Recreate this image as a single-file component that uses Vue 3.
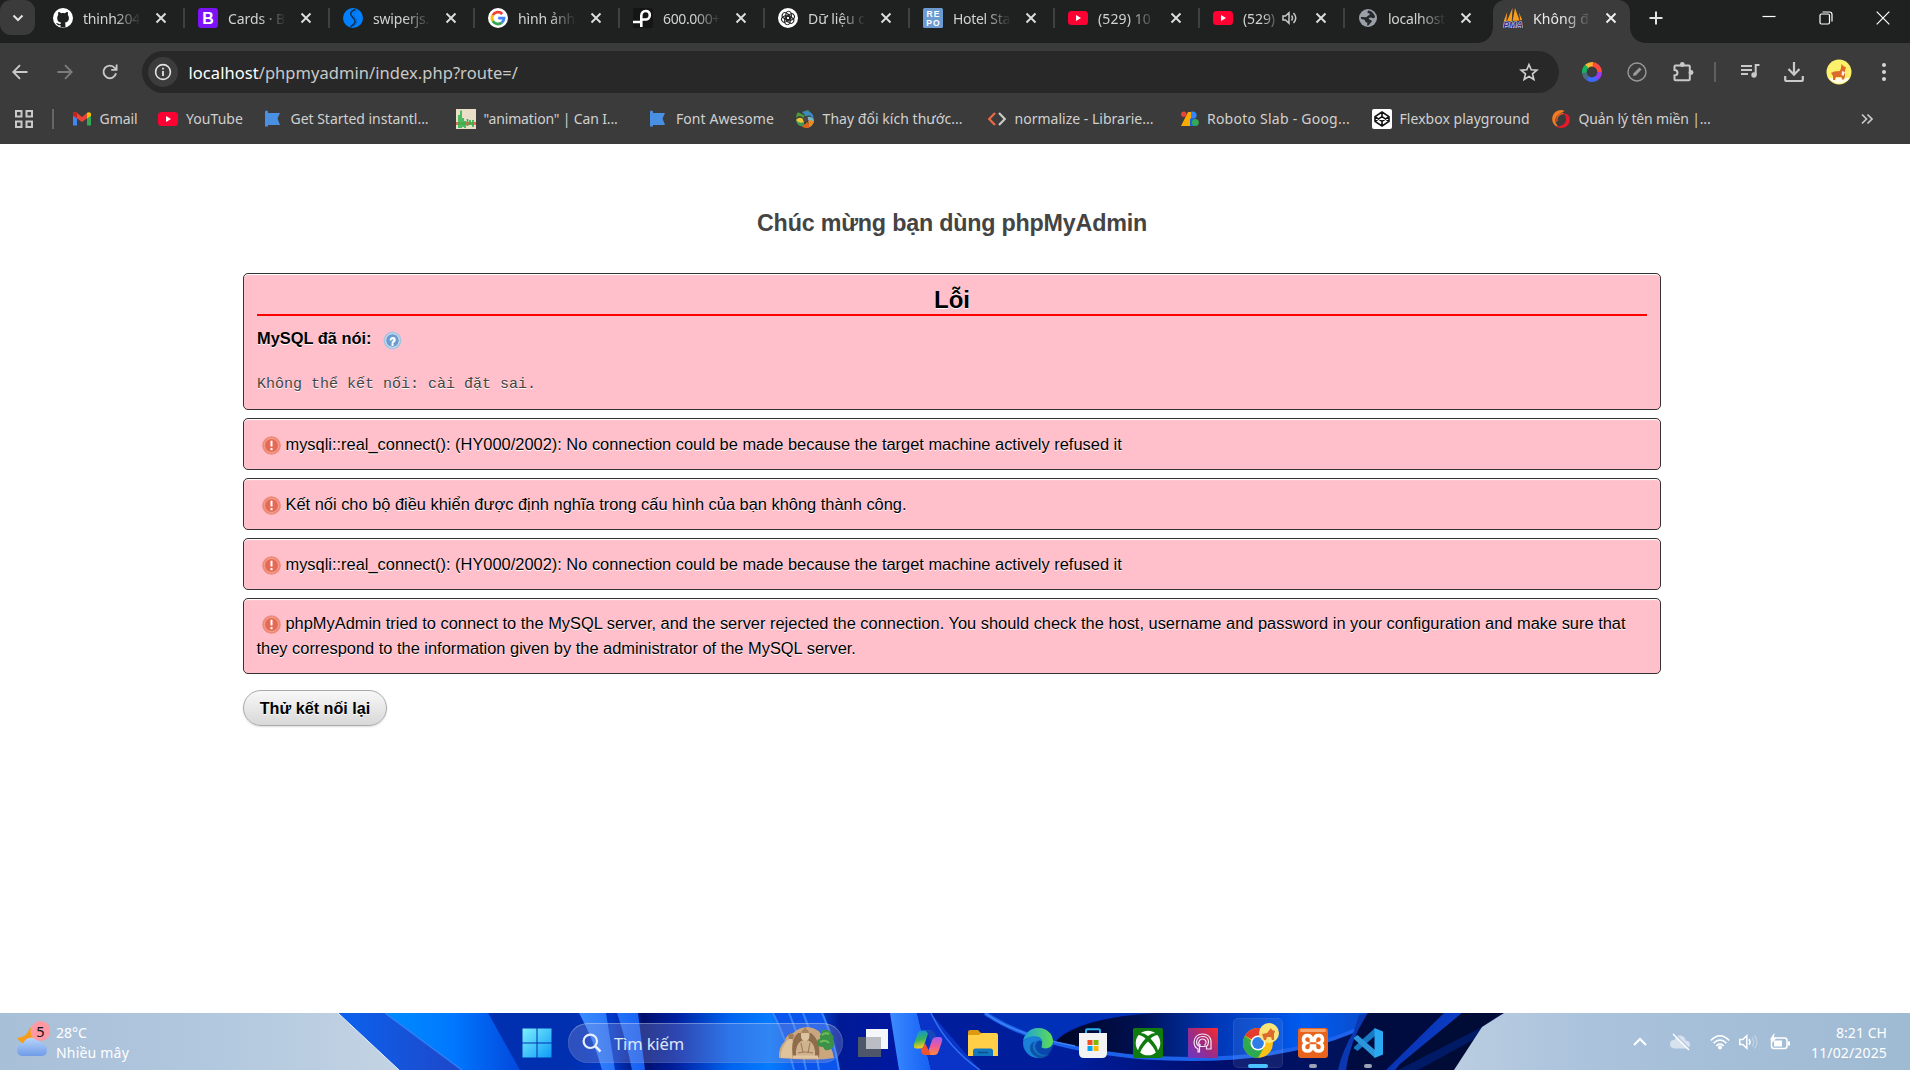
<script setup>
const icons = {
  github: '<circle cx="10" cy="10" r="10" fill="#fff"/><path d="M7.6 19.6v-2.4c-3 .6-3.4-1.2-4.6-2 1.700-.5 2.300 1.500 4.600.8.1-.7.4-1.100.7-1.400C5 14.200 4.200 12.300 4.200 9.700c0-1.100.4-2.100 1-2.800-.2-.8-.2-1.900.2-2.800 1.100 0 1.900.5 2.800 1.100 1.200-.3 2.500-.3 3.700 0 .9-.6 1.700-1.100 2.800-1.100.4.9.4 2 .2 2.800.6.7 1 1.700 1 2.800 0 2.600-.8 4.500-4.200 4.900.5.500.7 1.100.7 2v3z" fill="#1f2020"/>',
  bootstrap: '<rect width="20" height="20" rx="3" fill="#7b12f7"/><text x="10" y="15.500" font-family="Liberation Sans, sans-serif" font-size="16" font-weight="700" fill="#fff" text-anchor="middle">B</text>',
  swiper: '<circle cx="10" cy="10" r="10" fill="#0080ff"/><path d="M12.500 1.500C7 3 6.500 6.500 9.500 9.200s4.500 6-2 9.300" fill="none" stroke="#12304f" stroke-width="1.600"/><path d="M15 2.500C9.500 4 10 7 12.300 9.800s2.200 6-1.800 8.500" fill="none" stroke="#0068d8" stroke-width="1"/>',
  google: '<circle cx="10" cy="10" r="10" fill="#fff"/><g fill="none" stroke-width="2.800"><path d="M14.300 5.900A6 6 0 0 0 4.800 7.100" stroke="#ea4335"/><path d="M4.800 7.100a6 6 0 0 0 0 5.900" stroke="#fbbc05"/><path d="M4.800 13a6 6 0 0 0 9 1.600" stroke="#34a853"/><path d="M13.800 14.600A6 6 0 0 0 16 10.100H10.200" stroke="#4285f4"/></g>',
  pin: '<rect width="20" height="20" rx="2" fill="#151515"/><path d="M0 14h8M8.300 19V7.800c0-3 1.700-4.800 4.300-4.800s4.200 1.700 4.200 4.200-1.800 4.300-4.200 4.300H8.300" fill="none" stroke="#fff" stroke-width="2.600"/>',
  gpt: '<circle cx="10" cy="10" r="10" fill="#fff"/><g fill="none" stroke="#222" stroke-width="1"><rect x="7.800" y="3.300" width="5.600" height="8.500" rx="2.800"/><rect x="7.800" y="3.300" width="5.600" height="8.500" rx="2.800" transform="rotate(60 10 10)"/><rect x="7.800" y="3.300" width="5.600" height="8.500" rx="2.800" transform="rotate(120 10 10)"/><rect x="7.800" y="3.300" width="5.600" height="8.500" rx="2.800" transform="rotate(180 10 10)"/><rect x="7.800" y="3.300" width="5.600" height="8.500" rx="2.800" transform="rotate(240 10 10)"/><rect x="7.800" y="3.300" width="5.600" height="8.500" rx="2.800" transform="rotate(300 10 10)"/></g>',
  repo: '<rect width="20" height="20" rx="1.500" fill="#6c9bd2"/><g font-family="Liberation Sans, sans-serif" font-size="8.500" font-weight="700" fill="#fff" text-anchor="middle" letter-spacing="1"><text x="10.500" y="9">RE</text><text x="10.500" y="17.500">PO</text></g>',
  youtube: '<rect y="3" width="20" height="14" rx="3.500" fill="#ff0033"/><path d="M8 7v6l5-3z" fill="#fff"/>',
  globe: '<circle cx="10" cy="10" r="9" fill="#9aa0a8"/><path d="M10.500 2.600c-2 1.500-.8 2.700.7 2.800 1 .2.800 1.500-.4 1.800-1.500.3-1.400 1.800-3.200 2-1.800.1-3.200-.4-4.800-.1 0 2.700 2 2.200 3.200 2.700 1.800.6.600 2.300 2.800 2.600 1.300.2 0 2.200.6 3.400 2.300-.4 2.200-2.400 3.600-3.200 1.600-1 .9-2.500-.8-2.900-1.500-.4-2.300-1.500-.5-2 1.900-.4 2 .9 4 .6 1.600-.2 1.700-2.200.3-3.700C14.800 4.500 13 2.800 10.500 2.600z" fill="#25282b"/>',
  pma: '<path d="M9.500 0 4 13h4.800zM4.200 4 .8 13h2.600zM12 0l-2.400 13 7-.6zM16 4.500l1.200 7.800 2-.3z" fill="#f89c1c"/><text x="10" y="20" textLength="19.500" lengthAdjust="spacingAndGlyphs" font-family="Liberation Sans, sans-serif" font-size="8.500" font-weight="700" font-style="italic" fill="#33338c" stroke="#cfcbe8" stroke-width="1.200" paint-order="stroke" text-anchor="middle">PMA</text>',
  gmail: '<path d="M1 5v11.500h4V9z" fill="#4285f4"/><path d="M19 5v11.500h-4V9z" fill="#34a853"/><path d="M1 5c0-2 2.300-2.500 3.500-1.500L10 8l5.500-4.500V9L10 13 4.800 9.300 1 6.800z" fill="#ea4335"/><path d="M15 4c1.500-1.500 4-.8 4 1v1.800L15 9.500z" fill="#fbbc04"/><path d="M1 5c0-1.500 1.500-2.300 3-1.800L5 4v5.300L1 6.800z" fill="#c5221f"/>',
  flag: '<path d="M2 2.500q1.500-2 3 0V4h12l-2.500 5.500L17 16H5v1.500H2z" fill="#4a90e2"/>',
  anim: '<rect width="20" height="20" fill="#e9dfc8"/><path d="M0 14.500h20" stroke="#e56a4e" stroke-width="3"/><path d="M3 19V6M5 19V1.500M7 18V9M9 19v-7M11.500 17V10M14 16v-5M17 18v-7" stroke="#2fb44e" stroke-width="1.700"/>',
  swirl: '<g stroke="none"><path d="M10 7C8 3 11 0 15 2q-3 1-2 4z" fill="#4c9440"/><path d="M10 7C3 3 2 1 1 9q4-4 7 0z" fill="#4f9a3c"/><path d="M7 3q7-3 11 3l1 5q-3-6-8-4z" fill="#3a8cc0"/><path d="M12 8q5-1 7 3 0 4-4 7 1-5-2-7z" fill="#7db4c8"/><path d="M13 12q2 4-2 7 5 0 8-6-3-3-6-1z" fill="#ee8a22"/><path d="M12 13q-2 4-7 2 4 6 9 3 1-3-2-5z" fill="#d9641e"/><path d="M9 12q-5 2-8-2 0 5 4 7 5 1 4-5z" fill="#3c9a56"/><path d="M8 10Q4 7 1 11q3 4 8 2z" fill="#f0c436"/></g><circle cx="10.500" cy="10" r="2.600" fill="#4b4a44"/>',
  code: '<path d="M8 4 2.200 10 8 16" fill="none" stroke="#eb6c44" stroke-width="2.200"/><path d="M12 4l5.800 6L12 16" fill="none" stroke="#c9c9c9" stroke-width="2.200"/>',
  gfonts: '<path d="M9 3h3v14H2z" fill="#fbab00"/><circle cx="4.800" cy="5.300" r="2.700" fill="#ea4335"/><path d="M12 2.500h2.500a3.700 3.700 0 0 1 0 7.300H12z" fill="#3186ff"/><path d="M11 9.500h4a3.800 3.800 0 0 1 0 7.500h-4z" fill="#1a62e0"/><circle cx="16.300" cy="13.400" r="3.500" fill="#34a853"/>',
  codepen: '<rect width="20" height="20" rx="2" fill="#fff"/><path d="M10 3l7 4.700v4.600L10 17l-7-4.700V7.700zM10 3v4.600M10 12.400V17M3 7.700l7 4.700 7-4.700M3 12.300l7-4.700 7 4.700" fill="none" stroke="#111" stroke-width="1.600" stroke-linejoin="round"/>',
  redswirl: '<path d="M13.500 2C8.500-1 1 3 1.200 10.500c.2 4 3 7 6.300 7.500C4 14.500 3.500 10 6 7c2-2.500 5-3 7.500-5z" fill="#f07c22"/><path d="M12.500 4.500c6.500-.5 8 7 4.500 11.500-3 3.500-8 4-11.500 1.500 6 0 9-3 9.500-6.500.3-2.500-.5-4.500-2.500-6.500z" fill="#e11a2c"/><path d="M6 12.500C5 8 8 4.500 12.500 4.500" fill="none" stroke="#ef5a24" stroke-width="1.500"/>',
}

const tabs = [
  { icon: 'github', title: 'thinh204', w: 57 },
  { icon: 'bootstrap', title: 'Cards · B', w: 57 },
  { icon: 'swiper', title: 'swiperjs.', w: 56 },
  { icon: 'google', title: 'hình ảnh', w: 57 },
  { icon: 'pin', title: '600.000+', w: 57 },
  { icon: 'gpt', title: 'Dữ liệu c', w: 57 },
  { icon: 'repo', title: 'Hotel Sta', w: 57 },
  { icon: 'youtube', title: '(529) 10', w: 53 },
  { icon: 'youtube', title: '(529)', w: 32, audio: true },
  { icon: 'globe', title: 'localhost', w: 57 },
]

const bookmarks = [
  { icon: 'gmail', label: 'Gmail', w: 38, span: 86.4 },
  { icon: 'youtube', label: 'YouTube', w: 57, span: 104.6 },
  { icon: 'flag', label: 'Get Started instantl...', w: 138, span: 193 },
  { icon: 'anim', label: '"animation" | Can I...', w: 134, span: 192.4 },
  { icon: 'flag', label: 'Font Awesome', w: 98, span: 146.6 },
  { icon: 'swirl', label: 'Thay đổi kích thước...', w: 140, span: 192 },
  { icon: 'code', label: 'normalize - Librarie...', w: 139, span: 192.4 },
  { icon: 'gfonts', label: 'Roboto Slab - Goog...', w: 143, span: 192.6 },
  { icon: 'codepen', label: 'Flexbox playground', w: 130, span: 179 },
  { icon: 'redswirl', label: 'Quản lý tên miền |...', w: 132, span: 170 },
]

const refused = 'mysqli::real_connect(): (HY000/2002): No connection could be made because the target machine actively refused it'
const errors = [
  refused,
  'Kết nối cho bộ điều khiển được định nghĩa trong cấu hình của bạn không thành công.',
  refused,
  'phpMyAdmin tried to connect to the MySQL server, and the server rejected the connection. You should check the host, username and password in your configuration and make sure that they correspond to the information given by the administrator of the MySQL server.',
]

// Tracks a label out or in so that it takes the given width.
const vFit = {
  mounted(el, { value }) {
    const n = el.textContent.trim().length
    el.style.letterSpacing = (value - el.getBoundingClientRect().width) / n + 'px'
  },
}
</script>

<template>
  <div class="screen">
    <header class="strip">
      <div class="search-tabs">
        <svg width="12" height="8" viewBox="0 0 12 8"><path d="M1.500 1.500 6 6l4.500-4.500" fill="none" stroke="#e3e3e3" stroke-width="2" /></svg>
      </div>
      <div v-for="(t, i) in tabs" :key="i" class="tab" :class="{ last: i === tabs.length - 1 }">
        <svg class="fav" viewBox="0 0 20 20" v-html="icons[t.icon]"></svg>
        <div class="title" :class="{ short: t.audio }"><span v-fit="t.w">{{ t.title }}</span></div>
        <svg v-if="t.audio" class="audio" width="16" height="16" viewBox="0 0 16 16"><path d="M1 6v4h2.500L7 13.300V2.700L3.500 6zM9.500 5.500q2 2.500 0 5M11.500 3q4.500 5 0 10" fill="none" stroke="#c7c7c7" stroke-width="1.500" /></svg>
        <svg class="x" width="12" height="12" viewBox="0 0 12 12"><path d="M1.500 1.500l9 9M10.500 1.500l-9 9" stroke="#dedede" stroke-width="1.900" /></svg>
      </div>
      <div class="tab active">
        <svg class="fav" viewBox="0 0 20 20" v-html="icons.pma"></svg>
        <div class="title"><span v-fit="56">Không đ</span></div>
        <svg class="x" width="12" height="12" viewBox="0 0 12 12"><path d="M1.500 1.500l9 9M10.500 1.500l-9 9" stroke="#f0f0f0" stroke-width="1.900" /></svg>
      </div>
      <svg class="plus" width="14" height="14" viewBox="0 0 14 14"><path d="M7 .5v13M.5 7h13" stroke="#e3e3e3" stroke-width="2" /></svg>
      <div class="win">
        <svg width="14" height="14" viewBox="0 0 14 14"><path d="M.5 5.500h13" stroke="#fff" stroke-width="1.200" /></svg>
        <svg width="14" height="14" viewBox="0 0 14 14"><rect x="1" y="3" width="9.500" height="10" rx="1.500" fill="none" stroke="#fff" stroke-width="1.200" /><path d="M3.500 1h7Q13 1 13 3.500v7" fill="none" stroke="#fff" stroke-width="1.200" /></svg>
        <svg width="14" height="14" viewBox="0 0 14 14"><path d="M.7.7l12.600 12.600M13.300.7.7 13.300" stroke="#fff" stroke-width="1.200" /></svg>
      </div>
    </header>

    <div class="toolbar">
      <svg width="16" height="16" viewBox="0 0 16 16"><path d="M15.500 8H1.500M8 1.200 1.300 8 8 14.800" fill="none" stroke="#c9c9c9" stroke-width="1.900" /></svg>
      <svg width="16" height="16" viewBox="0 0 16 16"><path d="M.5 8h14M8 1.200 14.700 8 8 14.800" fill="none" stroke="#7c7c7c" stroke-width="1.900" /></svg>
      <svg width="16" height="16" viewBox="0 0 16 16"><path d="M14 9.300A6.300 6.300 0 1 1 12.800 4l1.400 1.600" fill="none" stroke="#c9c9c9" stroke-width="1.900" /><path d="M15.500.5v6.300H9.200V5h4.500V.5z" fill="#c9c9c9" /></svg>
      <div class="omnibox">
        <div class="info">
          <svg width="18" height="18" viewBox="0 0 18 18"><circle cx="9" cy="9" r="7.400" fill="none" stroke="#e3e3e3" stroke-width="1.600" /><path d="M9 8v5M9 4.800v1.800" stroke="#e3e3e3" stroke-width="1.800" /></svg>
        </div>
        <span v-fit="329.5" class="url"><b>localhost</b>/phpmyadmin/index.php?route=/</span>
        <svg class="star" width="20" height="20" viewBox="0 0 20 20"><path d="M10 2.500l2.200 5.300 5.700.4-4.400 3.700 1.400 5.600-4.900-3-4.900 3 1.400-5.600-4.400-3.700 5.700-.4z" fill="none" stroke="#d0d0d0" stroke-width="1.600" /></svg>
      </div>
      <div class="ext">
        <svg class="e1" width="22" height="22" viewBox="0 0 22 22"><g fill="none" stroke-width="4.600"><circle cx="11" cy="11" r="7.700" pathLength="60" stroke="#ff4b3e" stroke-dasharray="15 45" stroke-dashoffset="-45" /><circle cx="11" cy="11" r="7.700" pathLength="60" stroke="#9b3bf0" stroke-dasharray="10 50" /><circle cx="11" cy="11" r="7.700" pathLength="60" stroke="#3b6bff" stroke-dasharray="12 48" stroke-dashoffset="-9" /><circle cx="11" cy="11" r="7.700" pathLength="60" stroke="#4a6b80" stroke-dasharray="10 50" stroke-dashoffset="-21" /><circle cx="11" cy="11" r="7.700" pathLength="60" stroke="#19b45a" stroke-dasharray="10 50" stroke-dashoffset="-29" /><circle cx="11" cy="11" r="7.700" pathLength="60" stroke="#ffb52e" stroke-dasharray="8 52" stroke-dashoffset="-38" /></g></svg>
        <svg class="e2" width="20" height="20" viewBox="0 0 20 20"><circle cx="10" cy="10" r="9" fill="none" stroke="#9a9a9a" stroke-width="1.400" /><path d="M6 14l.6-2.800L12.400 5.400l2.200 2.200-5.800 5.800z" fill="#9a9a9a" /></svg>
        <svg class="e3" width="22" height="22" viewBox="0 0 22 22"><path d="M3.500 4.500h13.300q1 0 1 1v12.800q0 1-1 1H3.500q-1 0-1-1V14.500q3-.2 3-2.700t-3-2.700V5.500q0-1 1-1z" fill="none" stroke="#c9c9c9" stroke-width="2" /><circle cx="10.300" cy="3.500" r="2.400" fill="#c9c9c9" /><circle cx="19" cy="11.500" r="2.400" fill="#c9c9c9" /></svg>
        <i class="e4"></i>
        <svg class="e5" width="20" height="20" viewBox="0 0 20 20"><path d="M1 4h11M1 8h11M1 12h7" stroke="#c9c9c9" stroke-width="2" /><path d="M19.500 3h-3.800v10" fill="none" stroke="#c9c9c9" stroke-width="2" /><circle cx="14" cy="13" r="2.700" fill="#c9c9c9" /></svg>
        <svg class="e6" width="20" height="22" viewBox="0 0 20 22"><path d="M10 1v12M4.500 8l5.500 5.700L15.500 8M1.200 15v3.500q0 1.500 1.500 1.500h14.600q1.500 0 1.500-1.500V15" fill="none" stroke="#c9c9c9" stroke-width="2.200" /></svg>
        <svg class="e7" width="26" height="26" viewBox="0 0 26 26"><circle cx="13" cy="13" r="12.500" fill="#fdf06a" /><path d="M2.600 19a12.500 12.500 0 0 0 20.800 0z" fill="#fffde8" /><path d="M5 14l3-1.500 6-.5 1-3 .5-4 2.500 2.500L20 8l-1 3.500V17l-1 3.500h-2L15.500 18H10l-1 3H7v-4z" fill="#dd6b2c" /><path d="M16 12l3 1-1.500 4-2-1z" fill="#fff0dc" /></svg>
        <svg class="e8" width="6" height="20" viewBox="0 0 6 20"><g fill="#d5d5d5"><circle cx="3" cy="3" r="2" /><circle cx="3" cy="10" r="2" /><circle cx="3" cy="17" r="2" /></g></svg>
      </div>
    </div>

    <nav class="bookmarks">
      <svg class="apps" width="20" height="20" viewBox="0 0 20 20"><g fill="none" stroke="#c9c9c9" stroke-width="2"><rect x="2" y="2" width="5.500" height="5.500" /><rect x="12.500" y="2" width="5.500" height="5.500" /><rect x="2" y="12.500" width="5.500" height="5.500" /><rect x="12.500" y="12.500" width="5.500" height="5.500" /></g></svg>
      <i class="bar"></i>
      <div v-for="(b, i) in bookmarks" :key="i" class="bm" :style="{ width: b.span + 'px' }">
        <svg class="fav" viewBox="0 0 20 20" v-html="icons[b.icon]"></svg>
        <span v-fit="b.w">{{ b.label }}</span>
      </div>
      <svg class="more" width="12" height="12" viewBox="0 0 12 12"><path d="M1 1.500 5.500 6 1 10.500M6.500 1.500 11 6l-4.500 4.500" fill="none" stroke="#c9c9c9" stroke-width="1.700" /></svg>
    </nav>

    <main class="page">
      <h1 class="welcome"><span v-fit="390">Chúc mừng bạn dùng phpMyAdmin</span></h1>
      <section class="box first">
        <h1>Lỗi</h1>
        <p class="said">
          <strong>MySQL đã nói:</strong>
          <svg width="19" height="19" viewBox="0 0 19 19"><circle cx="9.500" cy="9.500" r="9" fill="#a9c4e2" /><circle cx="9.500" cy="9.500" r="6.800" fill="#6c9bcf" stroke="#d3e2f2" stroke-width="1" /><text x="9.500" y="13.500" font-family="Liberation Sans, sans-serif" font-size="11" font-weight="700" fill="#fff" text-anchor="middle">?</text></svg>
        </p>
        <pre>Không thể kết nối: cài đặt sai.</pre>
      </section>
      <section v-for="(e, i) in errors" :key="i" class="box" :class="{ tall: i === errors.length - 1 }">
        <svg class="bang" width="19" height="19" viewBox="0 0 19 19"><circle cx="9.500" cy="9.500" r="9.300" fill="#ee8878" /><circle cx="9.500" cy="9.500" r="7" fill="#e46a56" stroke="#f5a894" stroke-width="1" /><path d="M9.500 4.800v5.800M9.500 12v2.200" stroke="#fff" stroke-width="2" /></svg>{{ e }}
      </section>
      <button>Thử kết nối lại</button>
    </main>

    <footer class="taskbar">
      <svg class="wall" width="1910" height="57" viewBox="0 0 1910 57">
        <defs>
          <linearGradient id="sl"><stop offset="0" stop-color="#a8bfd8" /><stop offset=".5" stop-color="#b0c7de" /><stop offset="1" stop-color="#c3d3e3" /></linearGradient>
          <linearGradient id="sr"><stop offset="0" stop-color="#bacde1" /><stop offset=".3" stop-color="#aac2dc" /><stop offset="1" stop-color="#9fbad3" /></linearGradient>
          <linearGradient id="base" gradientUnits="userSpaceOnUse" x1="338" x2="1504"><stop offset="0" stop-color="#0b4fe0" /><stop offset=".14" stop-color="#0030b0" /><stop offset=".2" stop-color="#0030b0" /><stop offset=".235" stop-color="#0038c8" /><stop offset=".262" stop-color="#000f6e" /><stop offset=".29" stop-color="#0020a0" /><stop offset=".335" stop-color="#0062ee" /><stop offset=".37" stop-color="#057cff" /><stop offset=".405" stop-color="#0b50e0" /><stop offset=".43" stop-color="#001a96" /><stop offset=".48" stop-color="#0018a0" /><stop offset=".6" stop-color="#0020a4" /><stop offset=".75" stop-color="#000f70" /><stop offset=".85" stop-color="#00125c" /><stop offset="1" stop-color="#00103c" /></linearGradient>
          <linearGradient id="a"><stop offset="0" stop-color="#0a62ee" /><stop offset="1" stop-color="#1f47c8" /></linearGradient>
          <linearGradient id="b"><stop offset="0" stop-color="#008cff" /><stop offset=".5" stop-color="#0078ff" /><stop offset="1" stop-color="#0348dc" /></linearGradient>
          <linearGradient id="c"><stop offset="0" stop-color="#3b8bff" /><stop offset="1" stop-color="#1560f4" /></linearGradient>
          <linearGradient id="d" gradientUnits="userSpaceOnUse" x1="1060" x2="1366"><stop offset="0" stop-color="#000724" /><stop offset=".25" stop-color="#000f50" /><stop offset=".5" stop-color="#0036b4" /><stop offset=".8" stop-color="#005cf0" /><stop offset="1" stop-color="#0a4ccc" /></linearGradient>
          <linearGradient id="e" x2="1" y2=".6"><stop offset="0" stop-color="#000f5a" /><stop offset=".5" stop-color="#0a36b8" /><stop offset="1" stop-color="#0d45d4" /></linearGradient>
        </defs>
        <rect width="1910" height="57" fill="url(#base)" />
        <path d="M338 0h47l77 57h-63z" fill="url(#a)" />
        <path d="M385 0h103l32 57h-58z" fill="url(#b)" />
        <path d="M385 0l77 57" stroke="#2f7ff8" stroke-width="1.500" />
        <path d="M579 0h27l9 57h-13q-8-30-23-57zM617 0h21l7 57h-13q-6-30-15-57z" fill="url(#c)" />
        <path d="M773 0h50q12 28 16 57h-46q-8-32-20-57z" fill="#0b55ec" />
        <path d="M773 0q14 28 21 57M789 0q12 28 17 57M803 0q12 28 16 57M822 0q13 28 17 57" fill="none" stroke="#3585fb" stroke-width="2" />
        <path d="M890 0h27l14 57h-32z" fill="url(#c)" />
        <path d="M917 0h14l49 57h-49z" fill="#0a34c8" />
        <path d="M931 0h54q30 28 120 42l-40 15h-85z" fill="#001d9c" />
        <path d="M931 0q16 34 49 57" fill="none" stroke="#2f70f0" stroke-width="1.500" />
        <path d="M985 0h175q-86 4-106 30-40-8-69-30z" fill="#0030b8" />
        <path d="M1054 30q24-26 106-30h208l-14 18q-60 27-150 29-80-2-150-17z" fill="url(#d)" />
        <path d="M985 0q52 36 160 44.500 126 8 210-27" fill="none" stroke="#1d62ea" stroke-width="4" />
        <path d="M985 0q30 22 90 33" fill="none" stroke="#3d84fa" stroke-width="1.500" />
        <path d="M1354 18q-12 20-16 39h9q8-20 22-57l-10 2z" fill="#0b37b0" />
        <path d="M1368 0h95l-63 57h-54q4-30 22-57z" fill="#000b40" />
        <path d="M1462 0h-18l-58 57h14z" fill="url(#e)" />
        <path d="M1462 0h43v57h-110l5-6z" fill="#000c36" />
        <path d="M1502 0l-20 14-84 43h20l66-36z" fill="#001a66" />
        <path d="M0 0h338l61 57H0z" fill="url(#sl)" />
        <path d="M338 0l61 57" stroke="#e8f2ff" stroke-width="1" />
        <path d="M1910 0h-406l-22 14-28 43h456z" fill="url(#sr)" />
      </svg>

      <div class="weather">
        <svg width="34" height="38" viewBox="0 0 34 38"><defs><linearGradient id="cl" x2="0" y2="1"><stop offset="0" stop-color="#b9d5fb" /><stop offset="1" stop-color="#6f9be8" /></linearGradient></defs><path d="M14 6q-2 10-13 11 3 5 9 6l10-8z" fill="#f59e1c" /><path d="M7 35q-6 0-6-6t6-6q2-6.500 9-6.500t9 6q6 .5 6 6.500t-6 6z" fill="url(#cl)" /><circle cx="24.500" cy="10" r="10" fill="#ff99a4" /><text x="24.500" y="15.500" font-family="Noto Sans, sans-serif" font-size="14.500" text-anchor="middle" fill="#111">5</text></svg>
        <div class="lines"><span v-fit="31">28°C</span><br /><span v-fit="73">Nhiều mây</span></div>
      </div>

      <div class="dock">
        <div class="cell"><svg width="30" height="30" viewBox="0 0 30 30"><defs><linearGradient id="w" x2="1" y2="1"><stop offset="0" stop-color="#7cf0ff" /><stop offset="1" stop-color="#0d9bf5" /></linearGradient></defs><path d="M.5.5h14v14H.5zM15.500.5h14v14h-14zM.5 15.500h14v14H.5zM15.500 15.500h14v14h-14z" fill="url(#w)" /></svg></div>
        <div class="find">
          <svg width="20" height="20" viewBox="0 0 20 20"><circle cx="8.300" cy="8.300" r="6.700" fill="none" stroke="#e8eefb" stroke-width="2.200" /><path d="M13 13l5.500 5.500" stroke="#e8eefb" stroke-width="2.500" /></svg>
          <span v-fit="70">Tìm kiếm</span>
          <svg class="buddha" width="58" height="34" viewBox="0 0 58 34">
            <path d="M1 32Q0 21 7 15q1-7 8-8 6-6 15-6 12 1 15 12 9 6 11 19-12 2-27 1.500T1 32z" fill="#caa67e" />
            <path d="M3 27Q6 15 13 12l2 4-1 16H3z" fill="#dfc39d" />
            <path d="M15 31Q12 14 20 7h13q10 8 8 24z" fill="#8f6d4c" />
            <path d="M18 30q-1-12 6-15.500h6.500Q38 18 37 30z" fill="#cfb38e" />
            <path d="M23 8.500a4.200 5 0 0 1 8.400 0v2a4.200 4.600 0 0 1-8.400 0z" fill="#dcc39f" />
            <path d="M23.300 7q.4-3.500 2.700-3.500.2-2 1.200-2t1.200 2q2.300 0 2.700 3.500z" fill="#a9835c" />
            <path d="M23 17l2 10M32 17l-2 10M20 27q7-2 15 0" stroke="#a17d58" fill="none" stroke-width="1.200" />
            <path d="M15 29.500h25v3H15z" fill="#e0c7a2" />
            <path d="M10 9l3-2 3 2-1 4h-4z" fill="#a17d58" />
            <path d="M43 8q0-5 5-4 5 0 5 4 4 2 2 6 3 5-1 8-3 3-7 2l-2-3q-6 0-6-4 0-4 3-4-1-3 1-5z" fill="#3c9148" />
            <path d="M44 9q3-3 7-1M42 16q6-3 9 1" stroke="#6fbd5a" stroke-width="2" fill="none" />
          </svg>
        </div>
        <div class="cell"><svg width="30" height="30" viewBox="0 0 30 30"><path d="M8 1h22v20H8z" fill="#f4f6f9" /><path d="M0 9h23v20H0z" fill="#555b66" opacity=".92" /><path d="M8 9h15v12H8z" fill="#babdc4" /></svg></div>
        <div class="cell"><svg width="30" height="30" viewBox="0 0 30 30"><defs><linearGradient id="c1" x2=".2" y2="1"><stop offset="0" stop-color="#0f8df0" /><stop offset=".55" stop-color="#37b35b" /><stop offset="1" stop-color="#f3d01c" /></linearGradient><linearGradient id="c2" x2="0" y2="1"><stop offset="0" stop-color="#a55cf0" /><stop offset=".5" stop-color="#ee5a9a" /><stop offset="1" stop-color="#ff8a3c" /></linearGradient></defs><path d="M9 2.500h9l-3 3-4 12q-1 3-4 3H3.500Q0 20.500 1 16l3.500-10Q5.500 2.500 9 2.500z" fill="url(#c1)" /><path d="M21 27h-9l3-3 4-12q1-3 4-3h3.500q3.500 0 2.500 4.500l-3.500 10Q24.500 27 21 27z" fill="url(#c2)" /><path d="M12.500 2.500H18q3 0 4 3.500l1 3q-3 0-4 3l-1 2.500-3-9z" fill="#1747b8" /><path d="M17.500 27H12q-3 0-3.500-3l-1-3.500q3 0 3.500-3l1-2.500 4 8z" fill="#f0532e" /></svg></div>
        <div class="cell"><svg width="30" height="30" viewBox="0 0 30 30"><path d="M0 4q0-2 2-2h8l3 3h1v8H0z" fill="#dd9a10" /><path d="M0 7h11l3-2h14q2 0 2 2v21H0z" fill="#ffcf47" /><path d="M5 28v-5q0-2.500 2.500-2.500h15Q25 20.500 25 23v5z" fill="#1277c0" /><path d="M10 24.500h10" stroke="#0a4f8c" stroke-width="1.400" /></svg></div>
        <div class="cell"><svg width="30" height="30" viewBox="0 0 30 30"><defs><linearGradient id="ed"><stop offset="0" stop-color="#1ba2dd" /><stop offset="1" stop-color="#5fdc54" /></linearGradient></defs><circle cx="15" cy="15" r="15" fill="#1272c4" /><path d="M0 13C2 5 8 0 15 0c9 0 15 6 15 13 0 5-4 7.500-8 7.500-3 0-4.500-1-3.800-2.300C21 13 18 8.500 13 8.500 7 8.500 2 10 0 13z" fill="url(#ed)" /><path d="M0 14q4-5.500 11-5.500 6 .3 8 5Q15 11 12 14q-4 5 1 11 5 5 12 1.500Q21 30 15 30 2 29 0 14z" fill="#1a80d8" /><path d="M12 13q-5 6 1 12 5 5 14 .5Q23 30 16 30 7 27 7 20q0-5 5-7z" fill="#0d55a4" /><path d="M19 18q-1 2.500 4 2.500 5-.5 6.500-3.500Q31 25 27 25.500q-7 3-12-1-5-6-1-10.500 3-3 5 0z" fill="#02239c" opacity=".55" /></svg></div>
        <div class="cell"><svg width="30" height="30" viewBox="0 0 30 30"><path d="M8 7V2.500Q8 1.200 9.300 1.200h11.400Q22 1.200 22 2.500V7" fill="none" stroke="#2bb1ee" stroke-width="2" /><path d="M1 5h28v20q0 5-5 5H6q-5 0-5-5z" fill="#f3f3f3" /><path d="M9.500 12h5v5h-5z" fill="#f25022" /><path d="M15.500 12h5v5h-5z" fill="#7fba00" /><path d="M9.500 18h5v5h-5z" fill="#00a4ef" /><path d="M15.500 18h5v5h-5z" fill="#ffb900" /></svg></div>
        <div class="cell"><svg width="30" height="30" viewBox="0 0 30 30"><rect width="30" height="30" rx="2" fill="#107c10" /><circle cx="15" cy="15" r="12.300" fill="#fff" /><path d="M6.500 5Q11 4.500 15 8q4-3.500 8.500-3l1.800 2Q22 6.500 17.500 10.500q7 7.500 7.800 13.500l-2 1.500Q21 19 15 13.500 9 19 6.700 25.500l-2-1.500q.8-6 7.800-13.500Q8 6.500 4.700 7z" fill="#107c10" /></svg></div>
        <div class="cell"><svg width="30" height="30" viewBox="0 0 30 30"><defs><linearGradient id="m" y1="1" x2="1" y2="0"><stop offset="0" stop-color="#6838c8" /><stop offset=".5" stop-color="#a02a80" /><stop offset="1" stop-color="#ff2a2a" /></linearGradient></defs><rect width="30" height="30" fill="url(#m)" /><path d="M10 24v-3q-4-2-4-7 1-8 8.500-8T23 13v8h-4.500v-2.500q2-1.500 2-5-.5-5-6-5t-6 5.500q0 3 3 4.500V24zM12 18.500h5v-2q1.500-1 1-3-1-2.500-3.500-2.500T11 13.500t1 3z" fill="none" stroke="#f3e8f4" stroke-width="1.200" /></svg></div>
        <div class="cell on">
          <svg width="36" height="36" viewBox="0 0 36 36"><circle cx="15" cy="20" r="15" fill="#fbc116" /><path d="M15 20 2 12.500A15 15 0 0 1 28 12.500H15z" fill="#e33b2e" /><path d="M2 12.500A15 15 0 0 0 15 35l6.500-11.500H8.500z" fill="#2da94f" /><path d="M2 12.500l6.500 11h7z" fill="#2da94f" /><circle cx="15" cy="20" r="7.500" fill="#fff" /><circle cx="15" cy="20" r="5.900" fill="#2f7de9" /><circle cx="26" cy="10" r="10" fill="#f9e47a" /><path d="M19 11l5-1 4-5 1 2 3 1-1 3v6h-2l-1-3h-4l-1 3h-2z" fill="#dc6b2e" /></svg>
          <i class="run wide"></i>
        </div>
        <div class="cell"><svg width="30" height="30" viewBox="0 0 30 30"><rect width="30" height="30" rx="3" fill="#e8641c" /><rect x="2" y="1" width="26" height="3" rx="1.500" fill="#f6a46d" /><path d="M9.500 7.500q4 0 4 4v1h3v-1q0-4 4-4t4 4q0 2.500-2.500 3.500 2.500 1 2.500 4 0 4-4 4t-4-4v-1h-3v1q0 4-4 4t-4-4q0-3 2.500-4-2.500-1-2.500-3.500 0-4 4-4z" fill="none" stroke="#fff" stroke-width="3.500" /></svg><i class="run"></i></div>
        <div class="cell"><svg width="30" height="30" viewBox="0 0 30 30"><path d="M22 0v8L4.500 23 1 20.500V19z" fill="#1679c4" /><path d="M22 30v-8L4.500 7 1 9.500V11z" fill="#2b96dc" /><path d="M21.500 0 30 3.500v23L21.500 30z" fill="#2aa9f2" /></svg><i class="run"></i></div>
      </div>

      <div class="tray">
        <svg class="t1" width="14" height="10" viewBox="0 0 14 10"><path d="M1 8l6-6 6 6" fill="none" stroke="#fff" stroke-width="2" /></svg>
        <svg class="t2" width="20" height="18" viewBox="0 0 20 18"><path d="M4.500 15.500Q0 15 0 11t4.500-4Q6 2 10.500 2.500 15 3 15.500 7.500 20 8 20 11.500t-4 4z" fill="#d7e2ee" /><path d="M4.500 1l16 16" stroke="#a9bfda" stroke-width="1.500" /><path d="M3 1l16 16" stroke="#fff" stroke-width="1.500" /></svg>
        <svg class="t3" width="20" height="16" viewBox="0 0 20 16"><path d="M.8 6.500Q10-3 19.200 6.500M3.500 9.200q6.500-6.400 13 0M6.200 12q3.800-3.600 7.600 0" fill="none" stroke="#fff" stroke-width="1.600" /><circle cx="10" cy="13.600" r="2" fill="#fff" /></svg>
        <svg class="t4" width="20" height="16" viewBox="0 0 20 16"><path d="M.8 5.500v5h3l4 3.700V1.800l-4 3.700zM10 5.300q2 2.700 0 5.400" fill="none" stroke="#fff" stroke-width="1.500" /><path d="M13 3.500q3.500 4.500 0 9M15.500 1.500q5 6.500 0 13" fill="none" stroke="#c3d3e5" stroke-width="1.300" /></svg>
        <svg class="t5" width="20" height="18" viewBox="0 0 20 18"><rect x="1.500" y="5" width="15.500" height="10.500" rx="2.500" fill="none" stroke="#fff" stroke-width="1.500" /><path d="M4 7.500h8v6H4zM17.500 8.500H20v4h-2.500z" fill="#fff" /><path d="M4.500-.5 0 6.500h2.500L1 11l5.500-6H4z" fill="#fff" /></svg>
        <div class="clock"><span v-fit="51">8:21 CH</span><br /><span v-fit="76">11/02/2025</span></div>
      </div>
    </footer>
  </div>
</template>

<style>
body { margin: 0; overflow: hidden; }
</style>

<style scoped>
* { box-sizing: border-box; }
svg { display: block; flex: none; }
.screen { width: 1910px; height: 1070px; display: flex; flex-direction: column; overflow: hidden; background: #fff; font-family: "Noto Sans", "Open Sans", sans-serif; }
.strip { height: 43px; flex: none; display: flex; background: #1f2020; font-size: 14px; color: #d2d2d2; }
.search-tabs { width: 35px; height: 35px; border-radius: 11px; background: #3b3b3b; display: flex; align-items: center; justify-content: center; margin-right: 4px; }
.tab { width: 145px; height: 36px; display: flex; align-items: center; padding-left: 14px; position: relative; flex: none; }
.tab:not(.active)::after { content: ""; position: absolute; right: -1px; top: 8px; width: 2px; height: 20px; background: #3f4040; }
.tab.last::after { display: none; }
.tab.last { width: 149px; }
.fav { width: 20px; height: 20px; }
.title { width: 58px; margin-left: 10px; padding-top: 2px; line-height: 20px; white-space: nowrap; -webkit-mask-image: linear-gradient(90deg, #000 55%, transparent 100%); mask-image: linear-gradient(90deg, #000 55%, transparent 100%); }
.title.short { width: 37px; }
.audio { margin: 0 5px 0 2px; }
.tab .x { margin-left: 14px; }
.tab .audio + .x { margin-left: 12px; }
.tab.active { height: 43px; width: 137px; padding: 0 0 7px 10px; background: #3b3b3b; border-radius: 12px 12px 0 0; color: #e8e8e8; }
.tab.active::before, .tab.active::after { content: ""; position: absolute; bottom: 0; width: 15px; height: 15px; }
.tab.active::before { left: -15px; background: radial-gradient(circle at 0 0, transparent 14.500px, #3b3b3b 15px); }
.tab.active::after { right: -15px; background: radial-gradient(circle at 100% 0, transparent 14.500px, #3b3b3b 15px); }
.plus { margin: 11px 0 0 19px; }
.win { margin: 11px 20px 0 auto; display: flex; gap: 43px; }
.toolbar { height: 51px; flex: none; display: flex; align-items: center; background: #3b3b3b; padding: 7px 0 0 12px; gap: 29px; }
.omnibox { width: 1417px; height: 42px; border-radius: 21px; background: #282828; display: flex; align-items: center; padding: 0 20px 0 6px; margin-left: -5px; flex: none; }
.info { width: 30px; height: 30px; border-radius: 50%; background: #3c3c3c; display: flex; align-items: center; justify-content: center; margin-right: 10.500px; }
.url { font-size: 16.500px; color: #c9c9c9; white-space: nowrap; }
.url b { font-weight: 400; color: #fff; }
.star { margin-left: auto; }
.ext { display: flex; align-items: center; margin-left: -7px; }
.e2 { margin-left: 24px; }
.e3 { margin-left: 25px; }
.e4 { margin-left: 20px; width: 2px; height: 20px; background: #5f5f5f; }
.e5 { margin-left: 24px; }
.e6 { margin-left: 24px; }
.e7 { margin-left: 22px; }
.e8 { margin-left: 29px; }
.bookmarks { height: 50px; flex: none; display: flex; align-items: center; background: #3b3b3b; color: #d0d0d0; font-size: 14px; padding: 0 37px 1px 14px; }
.bar { width: 2px; height: 20px; background: #666; margin: 0 18px; }
.bm { display: flex; align-items: center; gap: 7.600px; white-space: nowrap; flex: none; }
.more { margin-left: auto; }
.page { flex: 1; display: flex; flex-direction: column; align-items: stretch; width: 1418px; margin-left: 243px; font-family: "Liberation Sans", Arial, sans-serif; font-size: 16.420px; line-height: 24.600px; color: #000; gap: 8px; }
.welcome { margin: 61px 0 24px; height: 36px; line-height: 36px; font-size: 23.300px; text-align: center; color: #444; }
.box { border: 1px solid #333; border-radius: 5px; background: #ffc0cb; box-shadow: inset 0 1px 1px #fff; height: 52px; padding: 12.700px 13px 0 12.500px; text-shadow: 0 1px 0 #fff; flex: none; }
.box.tall { height: 76px; padding-top: 12px; }
.box.first { height: 137px; padding: 8px 13px 0; }
.box h1 { margin: 0; height: 34px; line-height: 36px; font-size: 24px; text-align: center; border-bottom: 2px solid #f00; }
.said { margin: 10px 0 0; height: 24px; display: flex; align-items: center; gap: 11px; }
.said svg { margin-top: 4px; }
pre { margin: 23px 0 0; font-family: "Liberation Mono", monospace; font-size: 15px; line-height: 24px; color: #444; }
.bang { display: inline-block; vertical-align: -5px; margin: -4px 5px 0; }
button { align-self: flex-start; margin-top: 8px; width: 144px; height: 36px; border: 1px solid #aaa; border-radius: 18px; background: linear-gradient(#f8f8f8, #d8d8d8); box-shadow: 0 1px 2px #ddd; font: 700 16.200px "Liberation Sans", Arial, sans-serif; text-shadow: 0 1px 0 #fff; padding: 0; white-space: nowrap; color: #000; }
.taskbar { height: 57px; flex: none; position: relative; display: flex; justify-content: space-between; color: #fff; font-size: 14px; }
.wall { position: absolute; left: 0; top: 0; }
.weather { position: relative; width: 512px; padding: 8px 0 0 16px; display: flex; gap: 6px; }
.lines { line-height: 20px; margin-top: 2px; white-space: nowrap; }
.dock { position: relative; display: flex; gap: 5px; align-items: center; flex: none; }
.cell { width: 50px; height: 50px; margin-top: 3px; display: flex; align-items: center; justify-content: center; position: relative; border-radius: 5px; }
.cell.on { background: rgba(255, 255, 255, .07); box-shadow: inset 0 0 0 1px rgba(255, 255, 255, .08); }
.cell.on svg { margin: -5px 0 0 -4px; margin-right: -10px; }
.run { position: absolute; bottom: 0; left: 21px; width: 8px; height: 4px; border-radius: 2px; background: #9ba3b5; }
.run.wide { left: 15px; width: 20px; background: #4cc2ff; }
.find { width: 275px; height: 40px; border-radius: 20px; background: rgba(150, 160, 220, .3); box-shadow: inset 0 1px 0 rgba(255, 255, 255, .25), inset 0 0 0 1px rgba(255, 255, 255, .08); display: flex; align-items: center; padding: 0 7px 0 14px; margin-top: 2px; margin-left: 1px; font-size: 16.500px; color: #dfe6f8; white-space: nowrap; }
.find span { margin-left: 12px; padding-top: 1px; }
.buddha { margin-left: auto; }
.tray { position: relative; flex: 1; display: flex; align-items: center; padding-left: 240px; white-space: nowrap; }
.t2 { margin-left: 23px; }
.t3 { margin-left: 20px; }
.t4 { margin-left: 9px; }
.t5 { margin-left: 11px; }
.clock { margin-left: auto; margin-right: 23px; text-align: right; line-height: 20px; margin-top: 2px; }
</style>
